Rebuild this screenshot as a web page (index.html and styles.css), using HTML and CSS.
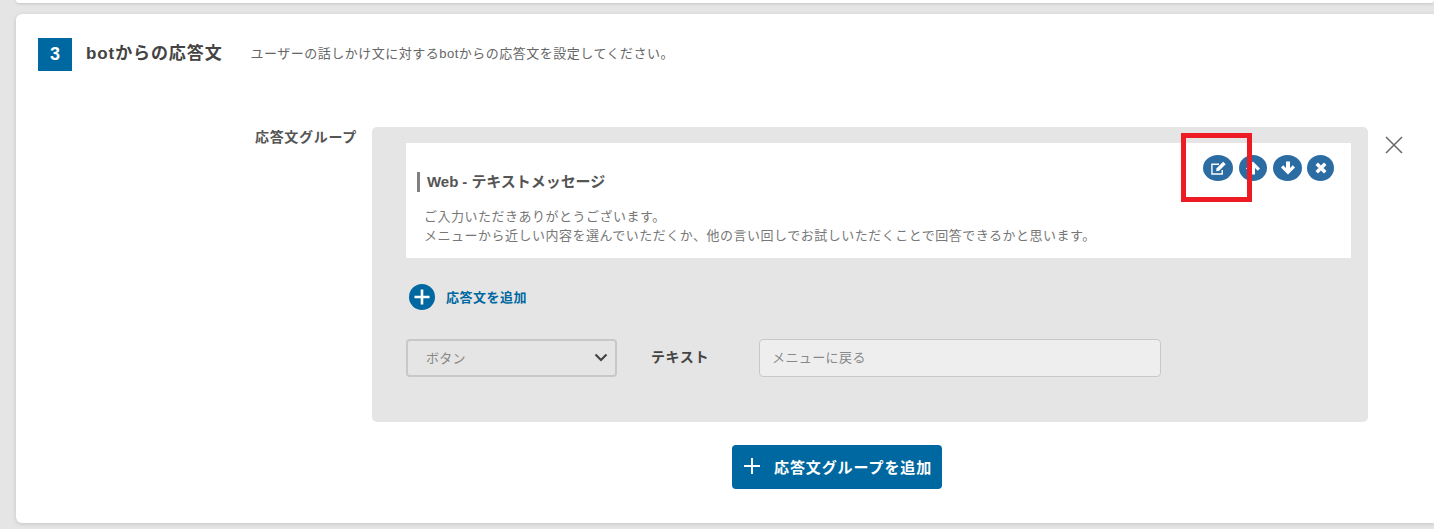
FILE: index.html
```html
<!DOCTYPE html>
<html lang="ja">
<head>
    <meta charset="UTF-8">
    <meta name="viewport" content="width=device-width, initial-scale=1.0">
    <title>botからの応答文</title>
    <link rel="stylesheet" href="styles.css">
</head>
<body>
    <div class="prev-card"></div>
    <section class="card">
        <div class="step-head">
            <div class="step-no">3</div>
            <h2 class="step-title">botからの応答文</h2>
            <p class="step-desc">ユーザーの話しかけ文に対するbotからの応答文を設定してください。</p>
        </div>
        <div class="form-row">
            <div class="form-label">応答文グループ</div>
            <div class="group">
                <div class="message">
                    <div class="msg-tools">
                        <button class="tool tool-edit">
                            <svg viewBox="0 0 16 16" width="17" height="17"><path d="M11.5 9.5V13.2H1.8V4H8.5" fill="none" stroke="#fff" stroke-width="1.3"/><path d="M6.2 7.8L12.4 1.6L14.8 4L8.6 10.2L5.8 10.6Z" fill="#fff"/></svg>
                        </button>
                        <button class="tool">
                            <svg viewBox="0 0 16 16" width="16" height="16"><path d="M8 1.5L15 8.5L12.8 10.7L10 8V14.5H6V8L3.2 10.7L1 8.5Z" fill="#fff"/></svg>
                        </button>
                        <button class="tool tool-down">
                            <svg viewBox="0 0 16 16" width="16" height="16"><path d="M8 14.5L15 7.5L12.8 5.3L10 8V1.5H6V8L3.2 5.3L1 7.5Z" fill="#fff"/></svg>
                        </button>
                        <button class="tool tool-close">
                            <svg viewBox="0 0 16 16" width="16" height="16"><path d="M2.5 5L5 2.5L8 5.5L11 2.5L13.5 5L10.5 8L13.5 11L11 13.5L8 10.5L5 13.5L2.5 11L5.5 8Z" fill="#fff"/></svg>
                        </button>
                    </div>
                    <h3 class="msg-title">Web - テキストメッセージ</h3>
                    <p class="msg-body">ご入力いただきありがとうございます。<br>メニューから近しい内容を選んでいただくか、他の言い回しでお試しいただくことで回答できるかと思います。</p>
                </div>
                <div class="add-row">
                    <span class="add-icon">
                        <svg viewBox="0 0 26 26" width="26" height="26"><circle cx="13" cy="13" r="13" fill="#0068a0"/><path d="M13 5.5V20.5M5.5 13H20.5" stroke="#fff" stroke-width="2.6"/></svg>
                    </span>
                    <span class="add-text">応答文を追加</span>
                </div>
                <div class="field-row">
                    <div class="select-box">
                        <span>ボタン</span>
                        <svg viewBox="0 0 14 9" width="14" height="9"><path d="M1.5 1.5L7 7L12.5 1.5" fill="none" stroke="#444" stroke-width="2.2"/></svg>
                    </div>
                    <div class="field-label">テキスト</div>
                    <div class="text-box">メニューに戻る</div>
                </div>
            </div>
            <button class="close-btn">
                <svg viewBox="0 0 18 18" width="18" height="18"><path d="M1 1L17 17M17 1L1 17" stroke="#666" stroke-width="1.5"/></svg>
            </button>
        </div>
        <div class="group-add">
            <button class="group-add-btn">
                <svg viewBox="0 0 18 18" width="18" height="18"><path d="M9 1V17M1 9H17" stroke="#fff" stroke-width="2"/></svg>
                応答文グループを追加
            </button>
        </div>
    </section>
    <!-- 注釈の赤枠 -->
    <div class="red-mark"></div>
</body>
</html>
```

FILE: styles.css
```css
* {
    margin: 0;
    padding: 0;
    box-sizing: border-box;
}

html,
body {
    width: 100%;
    height: 100%;
    overflow: hidden;
}

body {
    position: relative;
    background: #e5e5e5;
    color: #444;
    font-family: "Liberation Sans", "Noto Sans CJK JP", sans-serif;
}

button {
    border: none;
    font-family: inherit;
    cursor: pointer;
}

.prev-card {
    height: 3px;
    margin-left: 16px;
    background: #fff;
    border-radius: 0 0 6px 6px;
    box-shadow: 0 1px 3px rgba(0, 0, 0, 0.15);
}

.card {
    height: 509px;
    margin: 11px 0 0 16px;
    padding: 23px 0 0 22px;
    background: #fff;
    border-radius: 6px 0 0 6px;
    box-shadow: 0 1px 4px rgba(0, 0, 0, 0.15);
}

.step-head {
    display: flex;
    align-items: center;
    height: 34px;
}

.step-no {
    width: 34px;
    height: 33px;
    background: #0068a0;
    color: #fff;
    font-size: 18px;
    font-weight: 700;
    line-height: 33px;
    text-align: center;
}

.step-title {
    margin-left: 14px;
    padding-bottom: 6px;
    font-size: 17px;
    font-weight: 700;
    letter-spacing: 0.9px;
    color: #444;
    white-space: nowrap;
}

.step-desc {
    margin-left: 28px;
    padding-bottom: 4px;
    font-size: 13px;
    letter-spacing: 0.5px;
    color: #666;
    white-space: nowrap;
}

.form-row {
    display: flex;
    align-items: flex-start;
    margin-top: 56px;
}

.form-label {
    width: 334px;
    padding: 1px 15px 0 0;
    font-size: 14px;
    font-weight: 700;
    letter-spacing: 0.7px;
    color: #555;
    text-align: right;
    line-height: 18px;
    white-space: nowrap;
}

.group {
    width: 996px;
    height: 295px;
    padding: 16px 17px 0 34px;
    background: #e5e5e5;
    border-radius: 5px;
}

.message {
    position: relative;
    height: 115px;
    padding: 29px 11px 0 11px;
    background: #fff;
}

.msg-tools {
    position: absolute;
    top: 12px;
    right: 17px;
    display: flex;
    gap: 6px;
}

.tool {
    display: flex;
    align-items: center;
    justify-content: center;
    width: 28px;
    height: 26px;
    background: #2b6ca3;
    border-radius: 50%;
}

.tool-edit {
    width: 30px;
}

.tool-down {
    width: 29px;
}

.tool-close {
    width: 27px;
    margin-left: -1px;
}

.msg-title {
    padding-left: 7px;
    border-left: 3px solid #808080;
    font-size: 15px;
    font-weight: 700;
    letter-spacing: -0.05px;
    line-height: 20px;
    color: #555;
}

.msg-body {
    margin: 15px 0 0 7px;
    font-size: 13px;
    letter-spacing: 0.5px;
    line-height: 19px;
    color: #777;
    white-space: nowrap;
}

.add-row {
    display: flex;
    align-items: center;
    margin: 26px 0 0 3px;
    height: 26px;
}

.add-icon {
    display: flex;
    width: 26px;
    height: 26px;
}

.add-text {
    margin-left: 11px;
    padding-bottom: 2px;
    font-size: 13px;
    font-weight: 700;
    letter-spacing: 0.5px;
    color: #0068a0;
}

.field-row {
    display: flex;
    align-items: center;
    margin-top: 29px;
}

.select-box {
    display: flex;
    align-items: center;
    justify-content: space-between;
    width: 211px;
    height: 38px;
    padding: 0 7px 2px 18px;
    border: 2px solid #c8c8c8;
    border-radius: 4px;
    font-size: 13px;
    letter-spacing: 0.3px;
    color: #888;
}

.field-label {
    width: 142px;
    padding: 0 0 4px 34px;
    font-size: 14px;
    font-weight: 700;
    letter-spacing: 0.6px;
    color: #444;
}

.text-box {
    width: 402px;
    height: 38px;
    padding-left: 12px;
    background: #eee;
    border: 1px solid #c8c8c8;
    border-radius: 4px;
    font-size: 13px;
    letter-spacing: 0.4px;
    line-height: 35px;
    color: #888;
}

.close-btn {
    display: flex;
    margin: 9px 0 0 17px;
    background: none;
}

.group-add {
    display: flex;
    justify-content: center;
    width: 996px;
    margin: 23px 0 0 301px;
}

.group-add-btn {
    display: flex;
    align-items: center;
    gap: 13px;
    width: 210px;
    height: 44px;
    padding: 0 0 2px 11px;
    background: #0068a0;
    border-radius: 4px;
    color: #fff;
    font-size: 15px;
    font-weight: 700;
    letter-spacing: 0.9px;
    white-space: nowrap;
}

.red-mark {
    position: absolute;
    left: 1181px;
    top: 133px;
    width: 71px;
    height: 69px;
    border: 5px solid #ed1c24;
}
```
